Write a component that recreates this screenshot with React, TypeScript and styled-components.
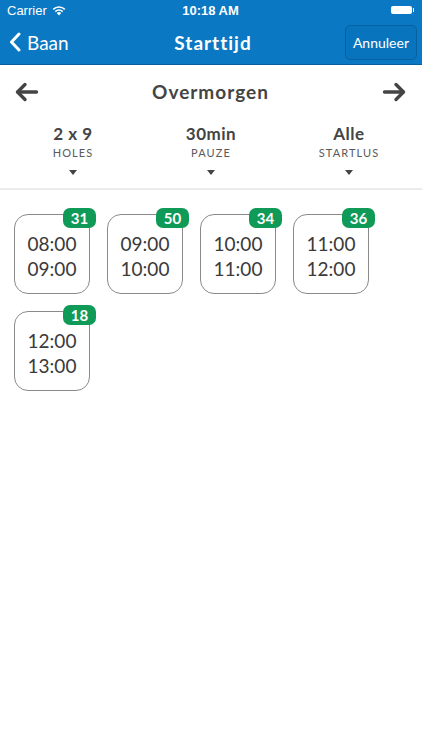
import styled, { createGlobalStyle } from "styled-components";

const GlobalStyle = createGlobalStyle`
    body {
        margin: 0;
        background: #ffffff;
        font-family: Lato, "Open Sans", sans-serif;
    }
`;

const Screen = styled.div`
    width: 422px;
    height: 750px;
    background: #ffffff;
    overflow: hidden;
`;

const Header = styled.header`
    background: #0a78c2;
    border-bottom: 1px solid #07609e;
    color: #ffffff;
`;

const StatusBar = styled.div`
    height: 20px;
    display: grid;
    grid-template-columns: 1fr auto 1fr;
    align-items: center;
    padding: 0 8px 0 7px;
    font-family: "Liberation Sans", Arial, sans-serif;
    font-size: 13px;
`;

const Carrier = styled.div`
    display: flex;
    align-items: center;
    gap: 5px;
`;

const Clock = styled.div`
    font-weight: bold;
    font-size: 13px;
`;

const Battery = styled.div`
    justify-self: end;
    display: flex;
    align-items: center;
    gap: 1px;
`;

const BatteryBody = styled.div`
    width: 21px;
    height: 8px;
    background: #ffffff;
    border-radius: 2px;
`;

const BatteryTip = styled.div`
    width: 1.5px;
    height: 4px;
    background: #ffffff;
`;

const NavBar = styled.div`
    height: 44px;
    display: grid;
    grid-template-columns: 1fr auto 1fr;
    align-items: center;
    padding: 0 5px 0 9px;
`;

const BackButton = styled.div`
    display: flex;
    align-items: center;
    gap: 6px;
    font-size: 19px;
`;

const Title = styled.h1`
    margin: 0;
    font-size: 19px;
    font-weight: bold;
    letter-spacing: 1px;
`;

const CancelButton = styled.button`
    justify-self: end;
    height: 35px;
    padding: 0 7px;
    border: 1px solid #08619f;
    border-radius: 5px;
    background: #0874bd;
    color: #ffffff;
    font-family: Lato, sans-serif;
    font-size: 14px;
`;

const DayNav = styled.div`
    display: flex;
    align-items: center;
    justify-content: space-between;
    padding: 13px 16px 0 15px;
    height: 27px;
`;

const DayTitle = styled.div`
    font-size: 19px;
    font-weight: bold;
    letter-spacing: 1px;
    color: #444444;
`;

const Filters = styled.div`
    display: grid;
    grid-template-columns: repeat(3, 1fr);
    padding: 19px 4px 13px;
    border-bottom: 2px solid #ebebeb;
`;

const Filter = styled.div`
    display: flex;
    flex-direction: column;
    align-items: center;
`;

const FilterValue = styled.div`
    font-size: 17px;
    font-weight: bold;
    letter-spacing: 0.5px;
    color: #444444;
    line-height: 20px;
`;

const FilterLabel = styled.div`
    font-size: 11px;
    font-weight: 400;
    letter-spacing: 1.1px;
    color: #5a5a5a;
    margin-top: 2px;
    line-height: 14px;
`;

const Caret = styled.div`
    margin-top: 10px;
    width: 0;
    height: 0;
    border-left: 4px solid transparent;
    border-right: 4px solid transparent;
    border-top: 5px solid #444444;
`;

const SlotGrid = styled.div`
    display: flex;
    flex-wrap: wrap;
    gap: 17px;
    padding: 24px 14px;
`;

const Slot = styled.div`
    position: relative;
    box-sizing: border-box;
    width: 76px;
    height: 80px;
    border: 1px solid #8a8a8a;
    border-radius: 14px;
    display: flex;
    flex-direction: column;
    align-items: center;
    justify-content: center;
    gap: 2px;
    padding-top: 3px;
    color: #3a3a3a;
    font-size: 19px;
    line-height: 23px;
`;

const Badge = styled.div`
    position: absolute;
    top: -7px;
    right: -7px;
    min-width: 33px;
    height: 20px;
    box-sizing: border-box;
    padding: 0 6px;
    border-radius: 7px;
    background: #0f9a57;
    color: #ffffff;
    font-size: 15px;
    font-weight: bold;
    line-height: 20px;
    text-align: center;
`;

const Arrow = ({ dir }: { dir: "left" | "right" }) => (
    <svg width="24" height="20" viewBox="0 0 24 20">
        <g
            transform={dir === "right" ? "translate(24 0) scale(-1 1)" : undefined}
            fill="none"
            stroke="#444444"
            strokeWidth="3.4"
            strokeLinecap="round"
            strokeLinejoin="round"
        >
            <path d="M10 2.5 L2.5 10 L10 17.5" />
            <path d="M3 10 H21.5" />
        </g>
    </svg>
);

const Wifi = () => (
    <svg width="14" height="11" viewBox="0 0 14 11">
        <path d="M7 10.5 L4.7 8 A3.3 3.3 0 0 1 9.3 8 Z" fill="#fff" />
        <path d="M3.3 6.6 A5.2 5.2 0 0 1 10.7 6.6" stroke="#fff" strokeWidth="1.5" fill="none" />
        <path d="M1.2 4.4 A8.2 8.2 0 0 1 12.8 4.4" stroke="#fff" strokeWidth="1.5" fill="none" />
    </svg>
);

const Chevron = () => (
    <svg width="12" height="20" viewBox="0 0 12 20">
        <path d="M10 2 L2.5 10 L10 18" fill="none" stroke="#fff" strokeWidth="3" strokeLinecap="round" strokeLinejoin="round" />
    </svg>
);

const filters = [
    { value: "2 x 9", label: "HOLES" },
    { value: "30min", label: "PAUZE" },
    { value: "Alle", label: "STARTLUS" },
];

const slots = [
    { from: "08:00", to: "09:00", count: 31 },
    { from: "09:00", to: "10:00", count: 50 },
    { from: "10:00", to: "11:00", count: 34 },
    { from: "11:00", to: "12:00", count: 36 },
    { from: "12:00", to: "13:00", count: 18 },
];

export default function App() {
    return (
        <Screen>
            <GlobalStyle />
            <Header>
                <StatusBar>
                    <Carrier>
                        Carrier <Wifi />
                    </Carrier>
                    <Clock>10:18 AM</Clock>
                    <Battery>
                        <BatteryBody />
                        <BatteryTip />
                    </Battery>
                </StatusBar>
                <NavBar>
                    <BackButton>
                        <Chevron />
                        Baan
                    </BackButton>
                    <Title>Starttijd</Title>
                    <CancelButton>Annuleer</CancelButton>
                </NavBar>
            </Header>
            <DayNav>
                <Arrow dir="left" />
                <DayTitle>Overmorgen</DayTitle>
                <Arrow dir="right" />
            </DayNav>
            <Filters>
                {filters.map((f) => (
                    <Filter key={f.label}>
                        <FilterValue>{f.value}</FilterValue>
                        <FilterLabel>{f.label}</FilterLabel>
                        <Caret />
                    </Filter>
                ))}
            </Filters>
            <SlotGrid>
                {slots.map((s) => (
                    <Slot key={s.from}>
                        <Badge>{s.count}</Badge>
                        <span>{s.from}</span>
                        <span>{s.to}</span>
                    </Slot>
                ))}
            </SlotGrid>
        </Screen>
    );
}
